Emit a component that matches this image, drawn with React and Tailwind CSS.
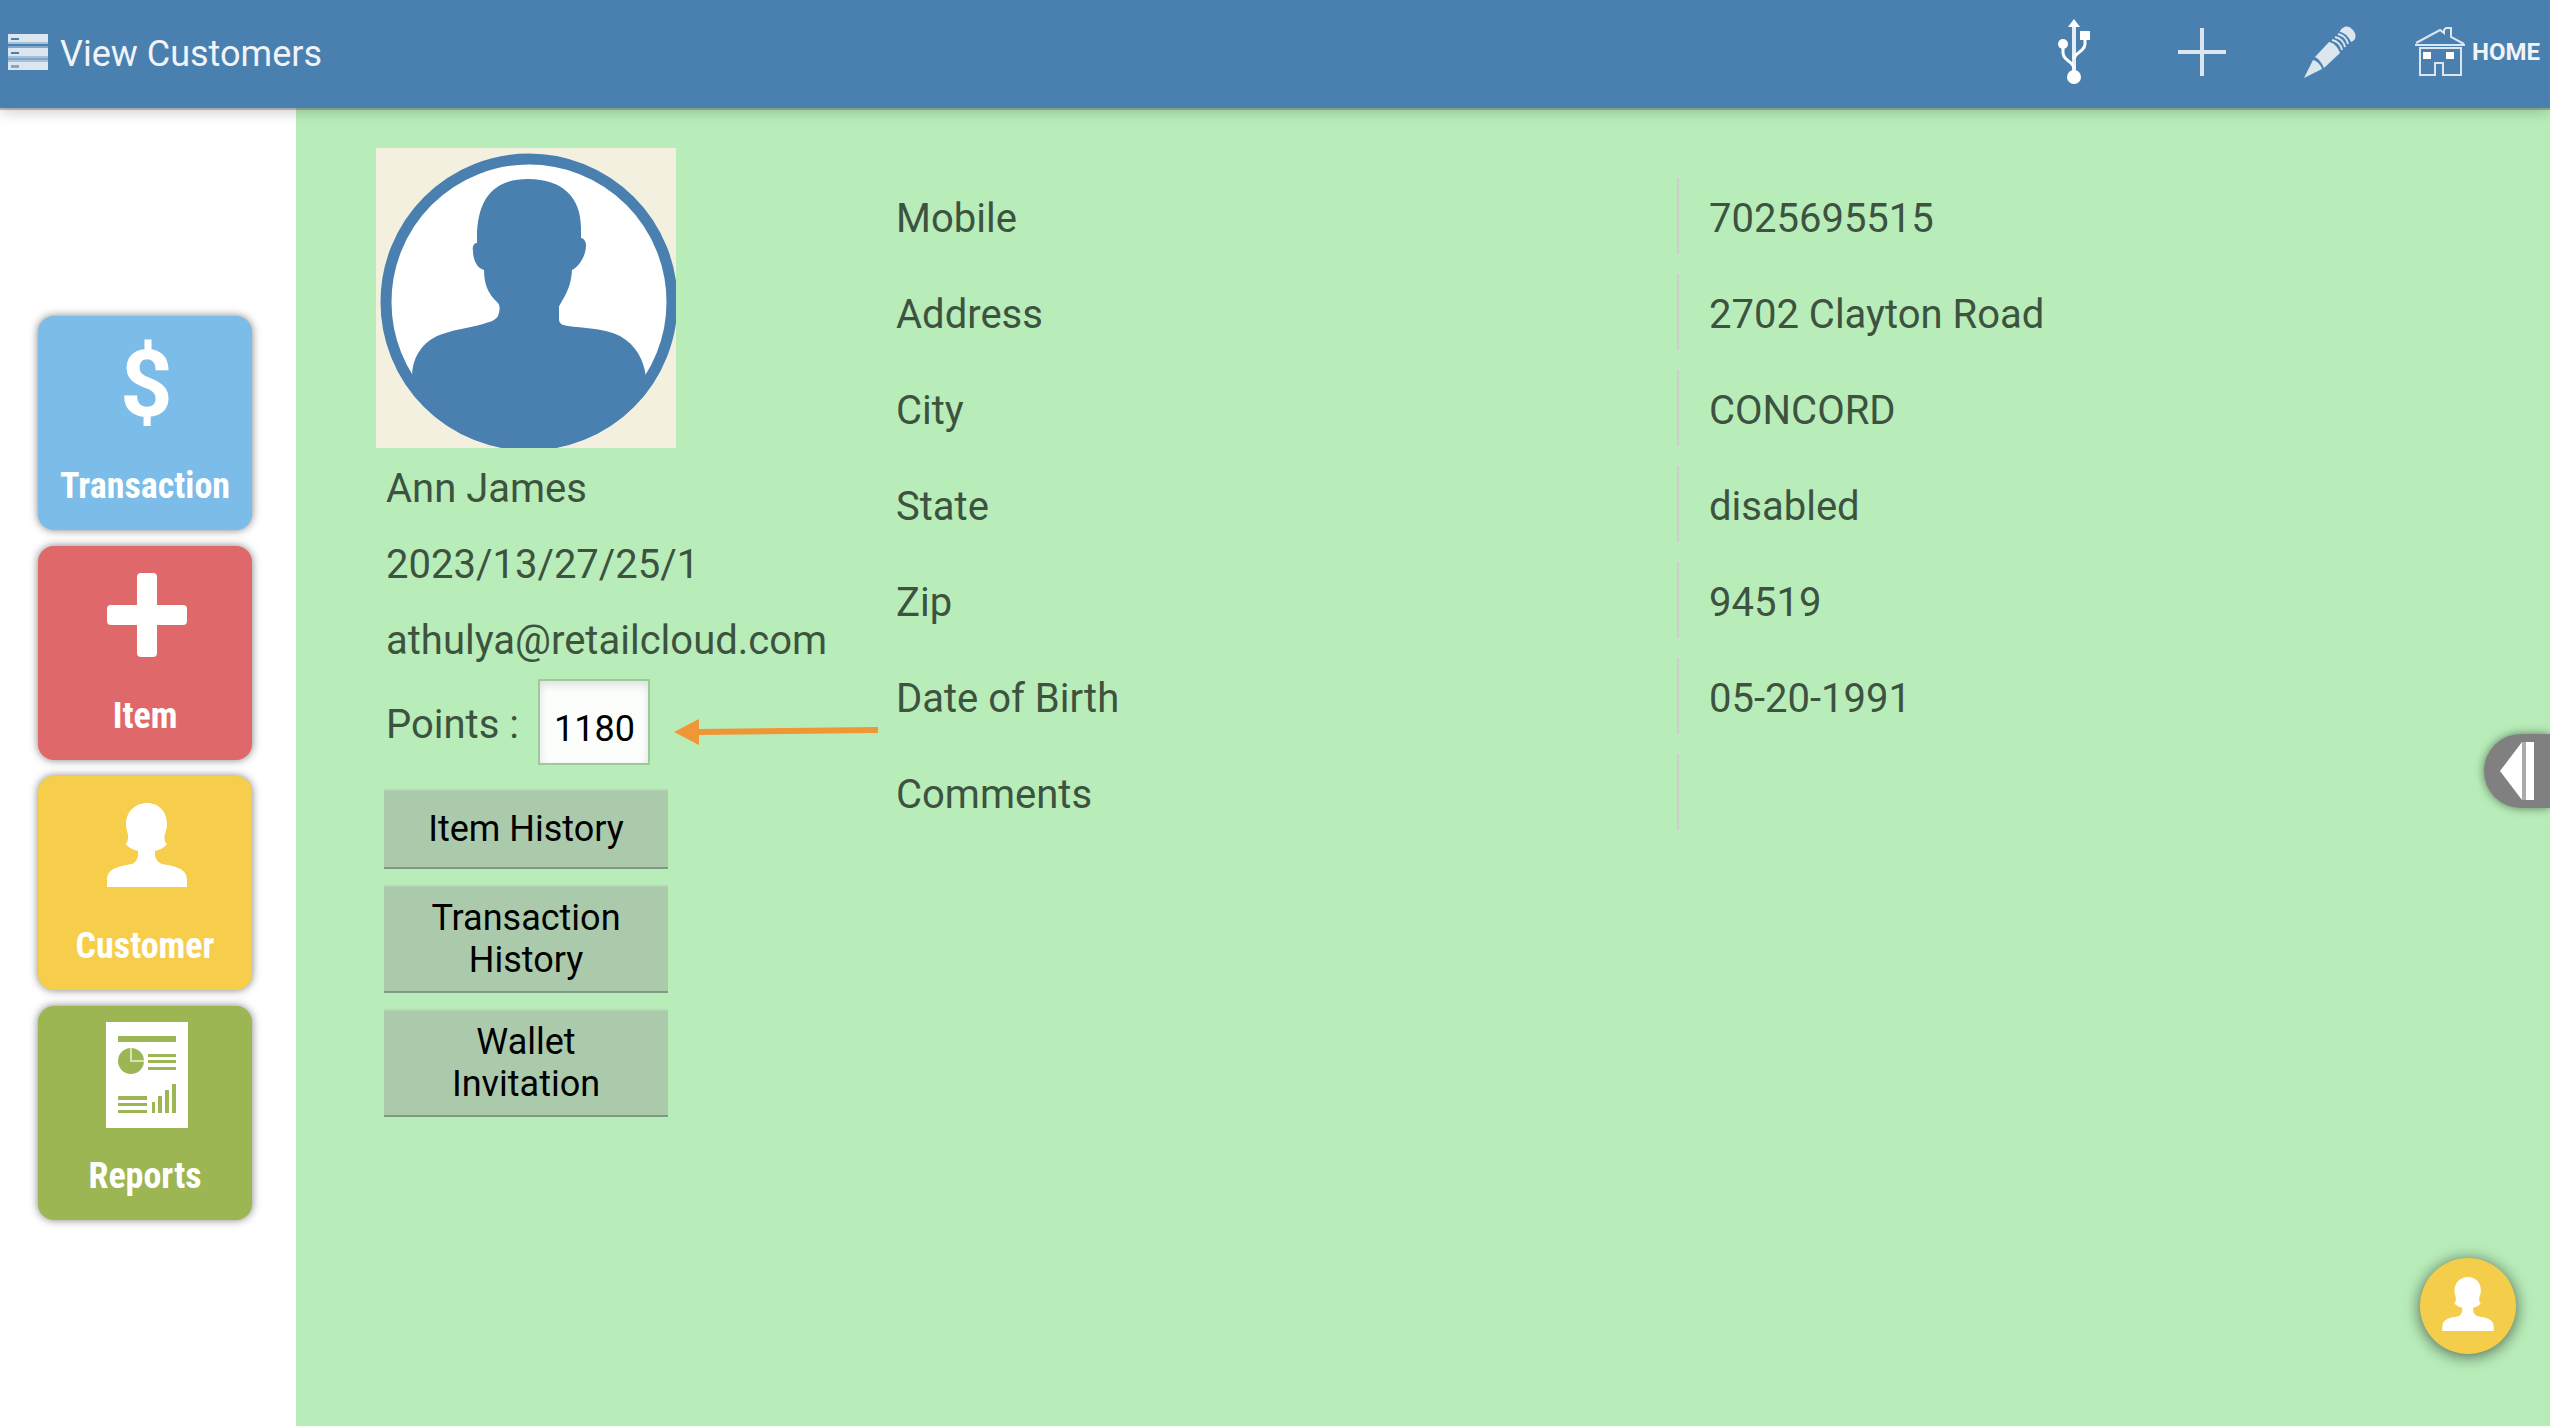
import React from "react";

function ServerIcon() {
  return (
    <svg viewBox="0 0 40 36" className="h-9 w-10 shrink-0" aria-hidden="true">
      <path fill="#a5c0d8" d="M0 0h40v10H0zM0 14h40v10H0zM0 26h40v10H0z" />
      <path fill="#dbe6ef" d="M0 0h40v8H0zM0 14h40v8H0zM0 28h40v8H0z" />
      <path fill="#4a80b0" d="M3 4h8v2H3zM3 18h8v2H3z" />
      <path fill="#80a6c8" d="M0 12h40v2H0zM0 24h40v2H0zM3 31h8v3H3z" />
    </svg>
  );
}

function UsbIcon() {
  return (
    <svg viewBox="0 0 32 66" className="h-[66px] w-8" fill="none" stroke="#fff" aria-hidden="true">
      <path stroke="#e6eef5" strokeWidth="4" d="M16 6v46" />
      <path strokeWidth="3" d="M5 26v8c0 3 1 4 3 6l5 4c2 2 3 3 3 6M27 16v9c0 3-1 4-3 6l-5 4c-2 2-3 3-3 5" />
      <path fill="#fff" stroke="none" d="M16 0l6 8H10zM22 12h10v9H22z" />
      <circle cx="5" cy="25" r="5" fill="#fff" stroke="none" />
      <circle cx="16" cy="58" r="7" fill="#fff" stroke="none" />
    </svg>
  );
}

function PlusIcon() {
  return (
    <svg viewBox="0 0 48 48" className="size-12" fill="#dbe6ef" aria-hidden="true">
      <path d="M22 0h4v22h22v4H26v22h-4V26H0v-4h22z" />
    </svg>
  );
}

function PencilIcon() {
  return (
    <svg viewBox="0 0 52 52" className="size-[52px]" fill="#dbe6ef" aria-hidden="true">
      <path d="M0 52L9 34c4 1 8 5 9 9z" />
      <path d="M11 31L25 16c5 1 9 5 11 11L20 42c-2-5-5-9-9-11z" />
      <path
        fill="none"
        stroke="#dbe6ef"
        strokeWidth="2"
        d="M28 14c5 1 9 5 10 10M31 11c5 1 9 5 10 10M34 8c5 1 9 5 10 10"
      />
      <path d="M36 5c3-5 8-6 12-2s5 9 1 12l-2 1C45 11 41 7 36 6z" />
    </svg>
  );
}

function HouseIcon() {
  return (
    <svg viewBox="0 0 52 50" className="h-[50px] w-[52px]" fill="none" stroke="#dbe6ef" strokeWidth="2" aria-hidden="true">
      <path d="M2 16L26 3l4 3V3l2-2h5v9l13 7M1 18h50M5 21h42M6 20v28h15V36h8v12h18V20" />
      <path fill="#fff" stroke="none" d="M9 25h8v7H9zM32 25h8v7h-8z" />
    </svg>
  );
}

function PersonIcon({ className }) {
  return (
    <svg viewBox="0 0 80 84" className={className} fill="#fff" aria-hidden="true">
      <path d="M40 0C28 0 19 9 19 21c0 7 3 10 2 15-.5 3-1.500 4-2.500 5 3.500 4 8.500 6 12.500 7v4c0 4-3 8-6 9C15 63 0 64 0 77v7h80v-7c0-13-15-14-25-16-3-1-7-5-7-9v-4c4-1 9-3 12-7-1-1-2-2-2.500-5-.5-5 2.500-8 2.500-15C60 9 52 0 40 0z" />
    </svg>
  );
}

function CrossIcon() {
  return (
    <svg viewBox="0 0 80 84" className="h-[84px] w-20" fill="#fff" aria-hidden="true">
      <rect x="30" width="20" height="84" rx="4" />
      <rect y="32" width="80" height="20" rx="4" />
    </svg>
  );
}

function ReportIcon() {
  return (
    <svg viewBox="0 0 82 106" className="h-[106px] w-[82px]" fill="#9db654" aria-hidden="true">
      <path fill="#fff" d="M0 0h82v106H0z" />
      <path d="M12 14h58v6H12z" />
      <circle cx="25" cy="39" r="13" />
      <path fill="none" stroke="#d8e2ba" strokeWidth="2" d="M25 26v13h13" />
      <path d="M42 32h28v3H42zM42 38h28v3H42zM42 45h28v3H42z" />
      <path d="M12 74h29v4H12zM12 81h29v3H12zM12 88h29v3H12z" />
      <path d="M46 80h3v11h-3zM52 74h4v17h-4zM59 68h4v23h-4zM66 62h4v29h-4z" />
    </svg>
  );
}

function Avatar() {
  return (
    <svg viewBox="0 0 300 300" className="size-[300px]" role="img" aria-label="Customer photo">
      <defs>
        <clipPath id="avatar-disc">
          <circle cx="153" cy="154" r="148" />
        </clipPath>
      </defs>
      <path fill="#f4f0e0" d="M0 0h300v300H0z" />
      <circle cx="153" cy="154" r="143" fill="#fff" stroke="#4a80b0" strokeWidth="11" />
      <path
        clipPath="url(#avatar-disc)"
        fill="#4a80b0"
        d="M152 31C120 31 101 48 101 90v5c-3 0-5 3-4 8 0 7 3 17 11 19 0 14 4 24 14 33 3 4 1 10 0 13-3 5-9 6-15 8-14 4-32 6-46 12-16 8-25 22-25 41v71h234v-71c-2-17-10-32-26-41-17-8-38-8-52-10-4-1-9-1-9-7v-12c2-6 12-16 13-37 5-2 14-12 14-25 0-3-2-7-5-7v-10c0-30-18-49-53-49z"
      />
    </svg>
  );
}

const tiles = [
  {
    label: "Transaction",
    color: "bg-[#7bbde8]",
    icon: <span className="text-[92px] leading-none font-bold">$</span>,
  },
  { label: "Item", color: "bg-[#df686a]", icon: <CrossIcon /> },
  { label: "Customer", color: "bg-[#f7ce4b]", icon: <PersonIcon className="h-[84px] w-20" /> },
  { label: "Reports", color: "bg-[#9db654]", icon: <ReportIcon /> },
];

const details = [
  ["Mobile", "7025695515"],
  ["Address", "2702 Clayton Road"],
  ["City", "CONCORD"],
  ["State", "disabled"],
  ["Zip", "94519"],
  ["Date of Birth", "05-20-1991"],
  ["Comments", ""],
];

const actions = ["Item History", "Transaction History", "Wallet Invitation"];

export default function App() {
  return (
    <div className="flex min-h-screen flex-col bg-white font-['Roboto',sans-serif] text-[#3d5340]">
      <header className="z-10 flex h-[108px] items-center bg-[#4a80b0] px-2 pb-1 text-[#f0f4f8] shadow-[0_2px_0_rgba(80,70,70,0.35),0_4px_14px_rgba(0,0,0,0.2)]">
        <ServerIcon />
        <h1 className="ml-3 flex-1 pt-1 text-[36px] leading-[42px]">View Customers</h1>
        <nav className="flex items-center">
          <button type="button" aria-label="USB" className="flex w-32 justify-center">
            <UsbIcon />
          </button>
          <button type="button" aria-label="Add" className="flex w-32 justify-center">
            <PlusIcon />
          </button>
          <button type="button" aria-label="Edit" className="flex w-32 justify-center">
            <PencilIcon />
          </button>
          <a href="#home" className="ml-5 flex items-center gap-[6px] pr-[2px] text-[24px] font-bold">
            <HouseIcon />
            HOME
          </a>
        </nav>
      </header>

      <div className="flex flex-1">
        <nav className="flex w-[296px] shrink-0 flex-col justify-center gap-4 pt-[2px] pl-[38px]">
          {tiles.map((t) => (
            <button
              key={t.label}
              type="button"
              className={`flex h-[214px] w-[214px] flex-col items-center rounded-[16px] pt-4 text-white shadow-[0_0_8px_rgba(0,0,0,0.5)] ${t.color}`}
            >
              <span className="flex h-[106px] items-center pl-[3px]">{t.icon}</span>
              <span className="mt-[27px] font-['Roboto_Condensed','Roboto',sans-serif] text-[36px] leading-[42px] font-bold">
                {t.label}
              </span>
            </button>
          ))}
        </nav>

        <main className="relative flex flex-1 items-start bg-[#b8edb9] pr-[92px] pl-20">
          <section className="w-[520px] shrink-0 pt-10">
            <Avatar />
            <div className="pt-[3px] pl-[10px] text-[40px] leading-[76px]">
              <p>Ann James</p>
              <p>2023/13/27/25/1</p>
              <p>athulya@retailcloud.com</p>
              <div className="flex items-center">
                <label htmlFor="points" className="w-[152px] pt-[6px]">
                  Points :
                </label>
                <input
                  id="points"
                  type="text"
                  defaultValue="1180"
                  className="h-[86px] w-28 border-2 border-[#9cca9d] bg-[#fcfefb] pt-[14px] pl-[14px] text-[36px] leading-[42px] text-black shadow-[inset_0_4px_8px_rgba(0,0,0,0.12)] outline-none"
                />
                <svg viewBox="0 0 204 26" className="mt-5 ml-6 h-[26px] w-[204px] shrink-0" fill="#f09637" aria-hidden="true">
                  <path d="M0 13L25 0v10l179-2v6L25 16v10z" />
                </svg>
              </div>
            </div>
            <div className="mt-6 ml-2 flex w-[284px] flex-col gap-4">
              {actions.map((a) => (
                <button
                  key={a}
                  type="button"
                  className="min-h-20 border-t-2 border-b-2 border-t-[#b8d4b9] border-b-[#809b83] bg-[#abcaac] px-10 py-[10px] text-[36px] leading-[42px] text-black"
                >
                  {a}
                </button>
              ))}
            </div>
          </section>

          <dl className="flex flex-1 flex-col gap-5 pt-[70px] text-[40px] leading-[82px]">
            {details.map(([k, v]) => (
              <div key={k} className="grid h-[76px] grid-cols-2">
                <dt>{k}</dt>
                <dd className="h-[76px] border-l-2 border-[#cccccc] pl-[30px]">{v}</dd>
              </div>
            ))}
          </dl>

          <button
            type="button"
            aria-label="Open drawer"
            className="absolute top-1/2 right-0 -mt-[33px] flex h-[74px] w-[66px] items-center rounded-l-full bg-[#808080] pl-4 shadow-[0_0_10px_rgba(0,0,0,0.5)]"
          >
            <svg viewBox="0 0 34 58" className="h-[58px] w-[34px]" fill="#fff" aria-hidden="true">
              <path d="M0 29L22 0v58z" />
              <path fill="#aaa" d="M22 0h4v58h-4z" />
              <path d="M26 0h8v58h-8z" />
            </svg>
          </button>

          <button
            type="button"
            aria-label="Customer"
            className="absolute right-[34px] bottom-[72px] flex size-24 items-center justify-center rounded-full bg-[#f4ce4b] shadow-[0_2px_16px_rgba(0,0,0,0.6)]"
          >
            <PersonIcon className="-mt-1 h-[54px] w-[52px]" />
          </button>
        </main>
      </div>
    </div>
  );
}
